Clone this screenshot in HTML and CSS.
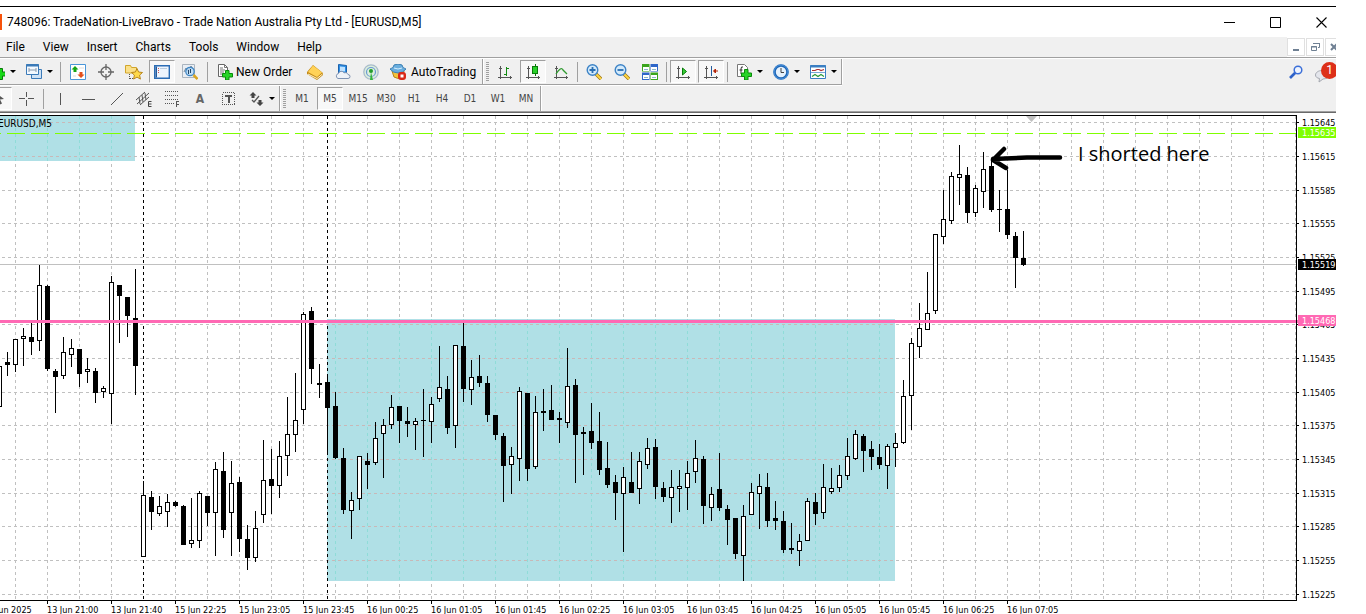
FILE: index.html
```html
<!DOCTYPE html>
<html lang="en">
<head>
    <meta charset="UTF-8">
    <meta name="viewport" content="width=device-width, initial-scale=1.0">
    <title>748096: TradeNation-LiveBravo - [EURUSD,M5]</title>

    <link rel="stylesheet" href="styles.css">
    <script defer src="chart.js"></script>
</head>
<body>
    <div class="app">

        <header class="titlebar">
            <span class="logo"></span>
            <h1>748096: TradeNation-LiveBravo - Trade Nation Australia Pty Ltd - [EURUSD,M5]</h1>
            <div class="window-buttons">
                <button aria-label="Minimize"><svg width="11" height="11"><path d="M0 5.5h11" stroke="#000"/></svg></button>
                <button aria-label="Maximize"><svg width="11" height="11"><path d="M.5.5h10v10H.5z" fill="none" stroke="#000"/></svg></button>
                <button aria-label="Close"><svg width="11" height="11"><path d="M.5.5l10 10M10.500.5l-10 10" stroke="#000" stroke-width="1.1"/></svg></button>
            </div>
        </header>

        <nav class="menubar">
            <button>File</button>
            <button>View</button>
            <button>Insert</button>
            <button>Charts</button>
            <button>Tools</button>
            <button>Window</button>
            <button>Help</button>
            <div class="child-buttons">
                <button aria-label="Minimize chart"><svg width="12" height="12"><path d="M3 9h6" stroke="#6f8093" stroke-width="2"/></svg></button>
                <button aria-label="Restore chart"><svg width="12" height="12"><path d="M4.500 3V2.500h6v4H9M4 2.500h7M2.500 5.500h5v4h-5zM2 6h6" fill="none" stroke="#6f8093"/></svg></button>
                <button aria-label="Close chart"><svg width="12" height="12"><path d="M3 3l6 6M9 3L3 9" stroke="#6f8093" stroke-width="2"/></svg></button>
            </div>
        </nav>

        <section class="toolbars">
            <div class="bars">
                <div class="bar bar-main">
                    <button class="tool drop" aria-label="New chart">
                        <svg class="icon" viewBox="0 0 16 16"><path d="M2 1h8v12H2z" fill="#fff" stroke="#777"/><path d="M9.500 4.500h4v3.500h3.500v4h-3.500v3.500h-4v-3.500H6V8h3.500z" fill="#18d818" stroke="#087a08"/></svg>
                    </button>
                    <button class="tool drop" aria-label="Profiles">
                        <svg class="icon" viewBox="0 0 16 16"><path d="M5.500 5.500h10v9h-10z" fill="#cfe2f5" stroke="#3b7ab8"/><path d="M.5.5h12v10H.5z" fill="#f3f9ff" stroke="#3b7ab8"/><path d="M0 1.500h13" stroke="#3b7ab8" stroke-width="2"/><path d="M3 4v4M3 6h7M10 4v4" stroke="#8a9aac"/></svg>
                    </button>
                    <span class="sep"></span>
                    <button class="tool" aria-label="Market Watch">
                        <svg class="icon" viewBox="0 0 16 16"><path d="M.5.5h15v15H.5z" fill="#fff" stroke="#4a96d8"/><path d="M5 2l3.500 3.500H6.500V8h-3V5.500H1.500z" fill="#14a514"/><path d="M11 14l-3.500-3.500h2V8h3v2.500h2z" fill="#e3501c"/><path d="M9 4h5M3 12h3" stroke="#ddd"/></svg>
                    </button>
                    <button class="tool" aria-label="Data Window">
                        <svg class="icon" viewBox="0 0 16 16"><circle cx="8" cy="8" r="5" fill="none" stroke="#666" stroke-width="1.300"/><path d="M8 0v6M8 10v6M0 8h6M10 8h6" stroke="#666" stroke-width="1.300"/></svg>
                    </button>
                    <button class="tool" aria-label="Navigator">
                        <svg class="icon wider" viewBox="0 0 18 16"><path d="M.5 9V1.500h5l1 2h5V9z" fill="#fbe089" stroke="#d1a62c"/><path d="M4.500 10v5M5 14.500h4" fill="none" stroke="#555" stroke-dasharray="1 1"/><path d="M12 4.500l1.600 3.500 3.900.5-2.900 2.600.8 4-3.400-2-3.400 2 .8-4-2.900-2.600 3.900-.5z" fill="#ffd94a" stroke="#b9861c"/></svg>
                    </button>
                    <button class="tool on" aria-label="Terminal">
                        <svg class="icon" viewBox="0 0 16 16"><path d="M.7 1.700h14.600v12.600H.7z" fill="#eef5fd" stroke="#2c6db5" stroke-width="1.400"/><path d="M1.500 2.500h1.500v11H1.500z" fill="#245b9c"/><path d="M4 4.500h1M4 6.500h1M4 8.500h1" stroke="#c55"/><path d="M6 4.500h7" stroke="#bcd"/></svg>
                    </button>
                    <button class="tool" aria-label="Strategy Tester">
                        <svg class="icon" viewBox="0 0 16 16"><path d="M.5.5h12v13H.5z" fill="#e9eef4" stroke="#aab4be"/><path d="M2 8l2-4 2 3 3-5 2 3" fill="none" stroke="#789"/><circle cx="8" cy="7.500" r="4.200" fill="#b8daf5" fill-opacity=".8" stroke="#3f86c4" stroke-width="1.300"/><path d="M6.500 6v4M8.500 5v4" stroke="#246"/><path d="M11.500 11l4 4" stroke="#d9a520" stroke-width="2.500"/></svg>
                    </button>
                    <span class="sep"></span>
                    <button class="tool wide">
                        <svg class="icon" viewBox="0 0 16 16"><path d="M1.500.5h6l3 3v9h-9z" fill="#fff" stroke="#666"/><path d="M7.500.5v3h3M3 4h3M3 6h5M3 8h4M3 10h3" fill="none" stroke="#777"/><path d="M8.500 6.500h3.500V9.500h3.500V13h-3.500v3H8.500v-3H5.500V9.500h3z" fill="#25d425" stroke="#0a8a0a"/></svg>
                        New Order
                    </button>
                    <button class="tool" aria-label="MetaEditor">
                        <svg class="icon" viewBox="0 0 16 16"><path d="M0 8l6-7 10 8v2l-6 5L0 10z" fill="#c48a17"/><path d="M1 8l5-6.500 9 7-5 4.500z" fill="#ffd257"/><path d="M1 10l9 4.500 5.500-4.500" fill="none" stroke="#fff3c4"/></svg>
                    </button>
                    <button class="tool" aria-label="Virtual Hosting">
                        <svg class="icon" viewBox="0 0 16 16"><path d="M3.500.5l8 1v8l-8-.5z" fill="#2c8fe6" stroke="#1b62ad"/><path d="M5 2.500l5 .5v4.500l-5-.5z" fill="#bfe2ff"/><path d="M3 14.500a2.600 2.600 0 0 1 .5-5A3 3 0 0 1 9 8.800a3 3 0 0 1 4 1.700 2 2 0 0 1 0 4z" fill="#eef2f8" stroke="#7f93b3"/></svg>
                    </button>
                    <button class="tool" aria-label="Signals">
                        <svg class="icon" viewBox="0 0 16 16"><circle cx="8" cy="8" r="7.200" fill="#dceedd" stroke="#a9bccb" stroke-width="1.300"/><circle cx="8" cy="8" r="4.500" fill="none" stroke="#6c9bd2" stroke-width="1.200"/><path d="M8 8l-1 8h3z" fill="#35b53b"/><circle cx="8" cy="7" r="2" fill="#249e2c"/></svg>
                    </button>
                    <button class="tool wide auto">
                        <svg class="icon" viewBox="0 0 16 16"><path d="M2 7q6 3 12 0l-1 6q-5 3-9 0z" fill="#f4c33c" stroke="#b98518"/><path d="M0 5q4-1 4-4 4-2 8 0 0 3 4 4-3 4-8 4T0 5z" fill="#6aaede" stroke="#3c80b4"/><path d="M4 4q4 2 8 0" fill="none" stroke="#d6eeff"/><rect x="8" y="8" width="8" height="8" rx="3" fill="#d92817"/><path d="M10.500 10.500h3v3h-3z" fill="#fff"/></svg>
                        AutoTrading
                    </button>
                </div>
                <div class="bar">
                    <span class="grip"></span>
                    <button class="tool" aria-label="Bar Chart">
                        <svg class="icon axes" viewBox="0 0 16 16"><path d="M3.500 2v13M1 13.500h14M2 4.500h3M13.500 12v3" /><path d="M9.500 3v9M7 10.500h2M10 4.500h2" stroke="#128a12" stroke-width="1.500"/></svg>
                    </button>
                    <button class="tool on" aria-label="Candlesticks">
                        <svg class="icon axes" viewBox="0 0 16 16"><path d="M3.500 2v13M1 13.500h14M2 4.500h3M13.500 12v3"/><path d="M10 0v12" stroke="#0a7a0a"/><path d="M7.500 2.500h5v7h-5z" fill="#29d129" stroke="#0a7a0a"/></svg>
                    </button>
                    <button class="tool" aria-label="Line Chart">
                        <svg class="icon axes" viewBox="0 0 16 16"><path d="M3.500 2v13M1 13.500h14M2 4.500h3M13.500 12v3"/><path class="soft" d="M3 10q5-8 7-4l4 4" stroke="#2f9a2f" stroke-width="1.300"/></svg>
                    </button>
                    <span class="sep"></span>
                    <button class="tool" aria-label="Zoom In">
                        <svg class="icon" viewBox="0 0 16 16"><path d="M10 10l5 5" stroke="#9b7416" stroke-width="3.400"/><path d="M10 10l5 5" stroke="#ffd640" stroke-width="2"/><circle cx="6.500" cy="6" r="5.300" fill="#d3eafb" stroke="#3d83c6" stroke-width="1.400"/><path d="M3.500 6h6M6.500 3v6" stroke="#2a6fb2" stroke-width="1.800"/></svg>
                    </button>
                    <button class="tool" aria-label="Zoom Out">
                        <svg class="icon" viewBox="0 0 16 16"><path d="M10 10l5 5" stroke="#9b7416" stroke-width="3.400"/><path d="M10 10l5 5" stroke="#ffd640" stroke-width="2"/><circle cx="6.500" cy="6" r="5.300" fill="#d3eafb" stroke="#3d83c6" stroke-width="1.400"/><path d="M3.500 6h6" stroke="#2a6fb2" stroke-width="1.800"/></svg>
                    </button>
                    <button class="tool" aria-label="Tile Windows">
                        <svg class="icon" viewBox="0 0 16 16"><path d="M0 0h8v8H0zM8 8h8v8H8z" fill="#3aa51c"/><path d="M8 0h8v8H8zM0 8h8v8H0z" fill="#2e66c9"/><path d="M1 3h6v4H1zM9 3h6v4H9zM1 11h6v4H1zM9 11h6v4H9z" fill="#fff"/><path d="M2 5.500h4M10 5.500h4M2 13.500h4M10 13.500h4" stroke="#8cb6c9"/><path d="M8 0v16M0 8h16" stroke="#f0f0f0"/></svg>
                    </button>
                    <span class="sep"></span>
                    <button class="tool on" aria-label="Auto Scroll">
                        <svg class="icon axes" viewBox="0 0 16 16"><path d="M3.500 2v13M1 13.500h14M2 4.500h3M13.500 12v3"/><path class="soft" d="M7.500 4l4 3.500-4 3.500z" fill="#35cf35" stroke="#0a7a0a"/></svg>
                    </button>
                    <button class="tool on" aria-label="Chart Shift">
                        <svg class="icon axes" viewBox="0 0 16 16"><path d="M3.500 2v13M1 13.500h14M2 4.500h3M13.500 12v3"/><path d="M8.500 2v10" stroke="#245b9c"/><path class="soft" d="M15 7h-4M12.500 5L10.500 7l2 2z" fill="#b32408" stroke="#b32408"/></svg>
                    </button>
                    <span class="sep"></span>
                    <button class="tool drop" aria-label="Indicators">
                        <svg class="icon" viewBox="0 0 16 16"><path d="M1.500.5h7l3 3v9h-10z" fill="#fff" stroke="#777"/><path d="M7 3q-2-1-2 2v5M3.500 6h3" fill="none" stroke="#333"/><path d="M8.500 5.500h3.500v3.500h3.500v3.500h-3.500V16H8.500v-3.500H5.500V9h3z" fill="#25d425" stroke="#0a8a0a"/></svg>
                    </button>
                    <button class="tool drop" aria-label="Periods">
                        <svg class="icon" viewBox="0 0 16 16"><circle cx="8" cy="8" r="6.500" fill="#e6f2fd" stroke="#2168b8" stroke-width="2.600"/><circle cx="8" cy="8" r="7" fill="none" stroke="#4a93dc"/><path d="M8 4v4.500h3" fill="none" stroke="#444"/></svg>
                    </button>
                    <button class="tool drop" aria-label="Templates">
                        <svg class="icon" viewBox="0 0 16 16"><path d="M.5 1.500h15v13H.5z" fill="#fff" stroke="#3a7fc2"/><path d="M0 2.500h16" stroke="#3a7fc2" stroke-width="2"/><path d="M2 6.500h3l2-1h2l2 1 3-1" fill="none" stroke="#a33" stroke-width="1.200"/><path d="M1 8.500h14" stroke="#7aa8d6"/><path d="M2 12.500l3-2 3 2 3-2 3 2" fill="none" stroke="#2a9a3a" stroke-width="1.200"/></svg>
                    </button>
                </div>
            </div>
            <div class="bars">
                <div class="bar bar-draw">
                    <button class="tool on" aria-label="Cursor">
                        <svg class="icon" viewBox="0 0 16 16"><path d="M5 2l8 6-4 .5 2 4-2 1-2-4-2 2z" fill="#555"/></svg>
                    </button>
                    <button class="tool" aria-label="Crosshair">
                        <svg class="icon line" viewBox="0 0 16 16"><path d="M7.500 1v5M7.500 9v6M0 7.500h6M9 7.500h6"/></svg>
                    </button>
                    <span class="sep"></span>
                    <button class="tool" aria-label="Vertical Line">
                        <svg class="icon line" viewBox="0 0 16 16"><path d="M8.500 2v12"/></svg>
                    </button>
                    <button class="tool" aria-label="Horizontal Line">
                        <svg class="icon line" viewBox="0 0 16 16"><path d="M2 8.500h13"/></svg>
                    </button>
                    <button class="tool" aria-label="Trendline">
                        <svg class="icon" viewBox="0 0 16 16"><path d="M3 14L15 2" stroke="#555"/></svg>
                    </button>
                    <button class="tool" aria-label="Equidistant Channel">
                        <svg class="icon" viewBox="0 0 16 16"><path d="M0 9L9 1M1 13L13 2M4 14l9-8M3 6l1 7M6 4l1 7M9 2l1 7" fill="none" stroke="#555"/><path d="M15.500 10.500h-3v5h3M12.500 13h3" fill="none" stroke="#444"/></svg>
                    </button>
                    <button class="tool" aria-label="Fibonacci Retracement">
                        <svg class="icon line" viewBox="0 0 16 16"><path d="M1 .5h13M1 4.500h13M1 8.500h13M1 12.500h9" stroke-dasharray="1 1"/><path d="M15 10.500h-3M12.500 10v6M12 13.500h3"/></svg>
                    </button>
                    <button class="tool letter">A</button>
                    <button class="tool" aria-label="Text Label">
                        <svg class="icon line" viewBox="0 0 16 16"><path d="M2.500 1.500h12v12h-12z" fill="none" stroke-dasharray="1 1"/><path d="M5 5h7M8.500 5v7" stroke-width="2"/></svg>
                    </button>
                    <button class="tool drop" aria-label="Arrows">
                        <svg class="icon" viewBox="0 0 16 16"><path d="M5 1l3.500 3.500H6.500V7h-3V4.500H1.500zM12 15l-3.500-3.500h2V9h3v2.500h2z" fill="#444"/><path d="M4 9l2 2 5-6" fill="none" stroke="#555" stroke-width="1.300"/></svg>
                    </button>
                </div>
                <div class="bar bar-periods">
                    <span class="grip"></span>
                    <button class="tool">M1</button>
                    <button class="tool on">M5</button>
                    <button class="tool">M15</button>
                    <button class="tool">M30</button>
                    <button class="tool">H1</button>
                    <button class="tool">H4</button>
                    <button class="tool">D1</button>
                    <button class="tool">W1</button>
                    <button class="tool">MN</button>
                </div>
            </div>
            <div class="status-tools">
                <button class="search" aria-label="Search">
                    <svg width="14" height="14" viewBox="0 0 14 14"><path d="M1 13l5.500-5.500" stroke="#2e62c8" stroke-width="2.600"/><circle cx="9" cy="5" r="3.800" fill="#eef4ff" stroke="#3b6fd8" stroke-width="1.500"/></svg>
                </button>
                <button class="chat" aria-label="Messages">
                    <svg width="16" height="14" viewBox="0 0 16 14"><path d="M7 1.500c4 0 7 2 7 4.500s-3 4-6 4l-4 3 .5-3.500C2 9 .5 8 .5 6c0-2.500 3-4.500 6.500-4.500z" fill="#e4e6ec" stroke="#a5a8b0"/></svg>
                    <span class="count">1</span>
                </button>
            </div>
        </section>

        <main class="chart">
            <svg id="chart" class="plot" role="img" aria-label="EURUSD M5 candlestick chart"></svg>
        </main>
    </div>
</body>
</html>
```
FILE: styles.css
```css
body{
    margin: 0;
    padding: 6px 30px 0 0;
    height: 100vh;
    box-sizing: border-box;
    background: white;
    font-family: Roboto, "Noto Sans", sans-serif;
    font-size: 12px;
    color: black;
    overflow: hidden;
}

button{
    font: inherit;
    color: inherit;
    background: none;
    border: none;
    padding: 0;
    margin: 0;
}

.app{
    display: flex;
    flex-direction: column;
    height: 100%;
    border-top: 1px solid black;
    box-sizing: border-box;
    overflow: hidden;
}

/* title bar */

.titlebar{
    display: flex;
    align-items: center;
    height: 30px;
    flex: none;
}

.logo{
    width: 2px;
    height: 16px;
    background-color: #f7520b;
}

.titlebar h1{
    flex: 1;
    margin: 0 0 0 5px;
    font-size: 12px;
    font-weight: normal;
    white-space: nowrap;
}

.window-buttons{
    display: flex;
    margin-right: -8px;
}

.window-buttons button{
    display: flex;
    align-items: center;
    justify-content: center;
    width: 46px;
    height: 28px;
}

/* menu */

.menubar{
    display: flex;
    flex: none;
    height: 20px;
    padding-left: 6px;
    gap: 18px;
    background-color: #f0f0f0;
    border-bottom: 1px solid #a0a0a0;
}

.child-buttons{
    display: flex;
    gap: 1px;
    margin-left: auto;
    margin-right: -7px;
    padding-top: 1px;
    background-color: white;
}

.child-buttons button{
    display: flex;
    align-items: center;
    justify-content: center;
    width: 18px;
    height: 18px;
    border: 1px solid #e0e0e0;
    box-sizing: border-box;
}

/* toolbars */

.toolbars{
    position: relative;
    flex: none;
    background-color: #f0f0f0;
    border-top: 1px solid white;
    border-bottom: 1px solid #696969;
    box-shadow: inset 0 -1px #a0a0a0;
    height: 53px;
}

.bars{
    display: flex;
    width: max-content;
    height: 25px;
    border-bottom: 1px solid #a0a0a0;
    box-shadow: 0 1px white;
}

.bars + .bars{
    margin-top: 1px;
    border-bottom: none;
    box-shadow: none;
}

.bar{
    display: flex;
    align-items: center;
    border-right: 1px solid #a0a0a0;
    box-shadow: 1px 0 white;
}

.bar-main{
    margin-left: -17px;
}

.bar-draw{
    margin-left: -15px;
}

.tool{
    display: flex;
    align-items: center;
    justify-content: center;
    width: 26px;
    height: 23px;
    margin: 0 1px;
    box-sizing: border-box;
}

.tool.on{
    background-color: #f8f8f8;
    border: 1px solid white;
    border-top-color: #a0a0a0;
    border-left-color: #a0a0a0;
}

.tool.drop{
    justify-content: flex-start;
    width: 37px;
    margin: 0;
    padding-left: 6px;
}

.tool.drop::after{
    content: "";
    margin-left: 5px;
    border: 3px solid transparent;
    border-top-color: black;
    border-bottom: none;
}

.tool.wide{
    justify-content: flex-start;
    width: 88px;
    padding-left: 5px;
    gap: 3px;
    white-space: nowrap;
}

.tool.auto{
    width: 95px;
    padding-left: 4px;
    gap: 5px;
}

.icon{
    width: 16px;
    height: 16px;
    flex: none;
}

.icon.wider{
    width: 18px;
}

.axes, .line{
    stroke: #555;
    fill: none;
    shape-rendering: crispEdges;
}

.soft{
    shape-rendering: auto;
}

.sep{
    width: 1px;
    height: 20px;
    margin: 0 2px;
    background-color: #a0a0a0;
}

.bar-main .sep{
    margin: 0 3px;
}

.grip{
    width: 3px;
    height: 19px;
    margin: 0 2px 0 3px;
    background: repeating-linear-gradient(#a0a0a0 0 1px, #f0f0f0 1px 2px);
}

.bar-periods, .letter{
    font-family: "DejaVu Sans Condensed", "DejaVu Sans", sans-serif;
    font-size: 10px;
    color: #444;
}

.letter{
    font-size: 12px;
    font-weight: bold;
    color: #666;
}

.status-tools{
    position: absolute;
    top: 3px;
    right: 0;
    display: flex;
    align-items: flex-start;
    gap: 12px;
    overflow: hidden;
}

.search{
    padding-top: 3px;
}

.chat{
    position: relative;
    width: 21px;
    text-align: left;
    padding-top: 7px;
}

.chat svg, .search svg{
    display: block;
}

.count{
    position: absolute;
    top: 0;
    left: 6px;
    width: 17px;
    height: 17px;
    border-radius: 50%;
    background-color: #dd2f18;
    color: white;
    line-height: 17px;
    text-align: center;
}

/* chart */

.chart{
    flex: 1;
    min-height: 0;
    display: flex;
}

.plot{
    flex: 1;
    width: 100%;
    font-family: "DejaVu Sans Condensed", "DejaVu Sans", sans-serif;
    font-size: 9px;
}

.plot .symbol{
    font-size: 10px;
}

.plot .note{
    font-family: "Open Sans", "Noto Sans", sans-serif;
    font-size: 20px;
    font-weight: 500;
}
```
FILE: chart.js
```js
const svg = document.getElementById('chart')
const NS = 'http://www.w3.org/2000/svg'

const STEP = 8
const AXIS_WIDTH = 39
const TOP = 2
const BOTTOM = 487

// high, body top, body bottom, low, 1 = bullish
// (vertical positions, counted from the top of the window)
const OFFSET = 113
const candles = [
    [366,366,407,407,1],
    [352,362,365,376,0],[339,339,365,372,1],[328,336,339,366,1],[323,337,342,355,0],
    [265,285,341,351,1],[285,286,369,371,0],[369,371,377,413,0],[337,352,376,379,1],
    [339,348,355,367,1],[349,349,374,387,0],[358,369,372,383,1],[368,371,393,403,0],
    [386,388,392,398,1],[276,282,394,424,1],[285,285,296,343,0],[297,297,316,337,0],
    [269,318,366,395,0],[481,495,557,557,1],[491,497,512,530,0],[496,506,514,516,1],
    [494,502,512,527,1],[501,502,506,507,0],[505,506,545,545,0],[498,540,544,548,1],
    [491,493,541,548,1],[496,496,513,526,0],[462,469,513,556,1],[452,471,530,538,0],
    [461,483,513,556,1],[477,482,539,552,0],[525,539,558,570,0],[511,528,558,562,1],
    [440,480,515,523,1],[449,479,486,514,0],[441,456,486,498,1],[397,434,456,476,1],
    [373,420,435,452,1],[312,314,410,424,1],[307,311,369,384,0],[364,383,385,398,0],
    [376,382,408,454,0],[392,406,458,459,0],[448,458,510,514,0],[492,500,511,539,1],
    [456,456,499,510,1],[453,461,465,489,0],[422,438,463,465,1],[419,425,434,478,1],
    [395,407,425,429,1],[406,406,421,443,0],[407,421,424,437,0],[418,421,425,450,1],
    [389,420,421,457,0],[397,404,422,443,1],[346,387,399,402,1],[376,389,428,434,0],
    [345,345,426,448,1],[322,346,389,402,0],[360,377,390,405,1],[355,376,383,387,0],
    [376,383,415,422,0],[415,415,435,440,0],[433,436,466,502,0],[447,456,465,494,1],
    [387,391,459,481,1],[393,393,469,481,0],[396,412,467,469,1],[389,411,413,431,0],
    [385,410,420,420,0],[412,418,420,443,0],[348,386,423,428,1],[379,385,435,483,0],
    [427,432,434,475,0],[403,431,443,449,0],[412,441,470,475,0],[442,468,485,488,0],
    [475,482,493,520,0],[467,477,494,552,1],[452,482,493,493,0],[452,461,489,504,1],
    [438,448,465,469,1],[439,447,487,499,0],[482,488,497,502,0],[470,487,498,523,1],
    [470,486,489,512,1],[461,473,488,510,1],[440,458,472,483,1],[456,459,506,524,0],
    [487,494,508,521,1],[453,489,508,511,0],[505,509,520,545,0],[518,518,554,559,0],
    [505,516,556,581,1],[483,492,515,515,1],[474,486,494,529,1],[473,487,521,527,0],
    [501,518,521,530,0],[511,521,550,553,0],[523,548,550,554,0],[534,541,551,566,1],
    [498,501,541,541,1],[493,502,514,525,0],[464,487,513,519,1],[468,488,492,494,1],
    [465,475,488,492,1],[438,456,476,480,1],[430,434,459,460,1],[434,436,451,472,0],
    [441,449,457,470,0],[444,457,465,469,0],[444,446,466,489,1],[433,443,448,467,1],
    [380,396,443,444,1],[338,343,396,430,1],[303,328,347,358,1],[272,313,330,330,1],
    [234,234,311,314,1],[190,219,237,244,1],[172,176,221,224,1],[145,174,178,205,1],
    [167,175,213,223,0],[185,188,213,217,1],[152,169,192,208,1],[159,166,210,212,0],
    [190,209,210,232,0],[170,209,235,239,0],[232,236,258,288,0],[231,258,265,266,0]
]

const times = ['13 Jun 2025', '13 Jun 21:00', '13 Jun 21:40', '15 Jun 22:25', '15 Jun 23:05',
    '15 Jun 23:45', '16 Jun 00:25', '16 Jun 01:05', '16 Jun 01:45', '16 Jun 02:25',
    '16 Jun 03:05', '16 Jun 03:45', '16 Jun 04:25', '16 Jun 05:05', '16 Jun 05:45',
    '16 Jun 06:25', '16 Jun 07:05']

const zones = [
    { x: 0, y: 3, w: 135, h: 45 },
    { x: 327, y: 206, w: 568, h: 262 }
]

function add(name, attrs, text)
{
    const el = document.createElementNS(NS, name)
    for (const key in attrs) el.setAttribute(key, attrs[key])
    if (text) el.textContent = text
    svg.appendChild(el)
    return el
}

const rect = (x, y, width, height, fill) => add('rect', { x, y, width, height, fill })

function hline(x1, x2, y, color, dash, offset)
{
    add('path', { d: `M${x1} ${y + 0.5}H${x2}`, stroke: color, 'stroke-dasharray': dash || 'none', 'stroke-dashoffset': offset || 0 })
}

function vline(x, y1, y2, color, dash)
{
    add('path', { d: `M${x + 0.5} ${y1}V${y2}`, stroke: color, 'stroke-dasharray': dash || 'none' })
}

const gridRow = i => Math.floor(9.7 + i * 33.68)

function drawGrid(right)
{
    for (let x = 15; x < right; x += 32) vline(x, TOP + 1, BOTTOM - 1, '#c0c0c0', '3 3')
    for (let i = 0; i < 15; i++) hline(2, right, gridRow(i), '#c0c0c0', '3 3')
}

function drawZones()
{
    for (const z of zones) {
        rect(z.x, z.y, z.w, z.h, '#b0e0e6')
        for (let x = 15; x < z.x + z.w; x += 32) {
            if (x > z.x) vline(x, z.y, z.y + z.h, '#8fdcd8', '3 3')
        }
        for (let i = 0; i < 15; i++) {
            const y = gridRow(i)
            if (y > z.y && y < z.y + z.h) hline(z.x, z.x + z.w, y, '#c8b8b8', '3 3', (z.x + 4) % 6)
        }
    }
}

function drawCandles()
{
    candles.forEach(([high, top, bottom, low, up], i) => {
        const x = (i - 1) * STEP + 7
        rect(x, high - OFFSET, 1, low - high, 'black')
        rect(x - 2, top - OFFSET, 5, bottom - top, 'black')
        if (up) rect(x - 1, top - OFFSET + 1, 3, bottom - top - 2, 'white')
    })
}

function drawAxes(right)
{
    hline(0, right + 1, TOP, 'black')
    hline(0, right + 1, BOTTOM, 'black')
    vline(right, TOP, BOTTOM, 'black')

    for (let i = 0; i < 15; i++) {
        hline(right, right + 3, gridRow(i), 'black')
        add('text', { x: right + 6, y: gridRow(i) + 4 }, ((115645 - i * 30) / 100000).toFixed(5))
    }
    times.forEach((time, i) => {
        const x = i * 64 - 17
        vline(x, BOTTOM, BOTTOM + 4, 'black')
        add('text', { x, y: 500 }, time)
    })
}

function drawPrice(right, y, text, color, ink)
{
    rect(right + 2, y, AXIS_WIDTH, 11, color)
    add('text', { x: right + 6, y: y + 9, fill: ink }, text)
}

function draw()
{
    const right = svg.getBoundingClientRect().width - AXIS_WIDTH - 1
    svg.textContent = ''
    svg.setAttribute('fill', 'black')

    drawGrid(right)
    drawZones()
    vline(143, TOP + 1, BOTTOM - 1, 'black', '3 3')
    vline(327, TOP + 1, BOTTOM - 1, 'black', '3 3')
    hline(7 - 24, right, 20, '#7fff00', '18 6')
    hline(0, right, 151, '#c0c0c0')
    drawCandles()
    rect(0, 207, right + 2, 3, '#ff69b4')
    drawAxes(right)

    add('path', { d: 'M1026 3h11l-5.500 6z', fill: '#c0c0c0' })
    add('text', { x: -2, y: 14, class: 'symbol' }, 'EURUSD,M5')

    drawPrice(right, 14, '1.15635', '#7fff00', 'white')
    drawPrice(right, 146, '1.15519', 'black', 'white')
    drawPrice(right, 202, '1.15468', '#ff69b4', 'white')

    add('path', {
        d: 'M1060 44.500H1027L993 46M1004 36L993 47L1006 55', fill: 'none', stroke: 'black',
        'stroke-width': 4.500, 'stroke-linecap': 'round', 'stroke-linejoin': 'round'
    })
    add('text', { x: 1078, y: 48, class: 'note' }, 'I shorted here')
}

draw()
window.addEventListener('resize', draw)
```
